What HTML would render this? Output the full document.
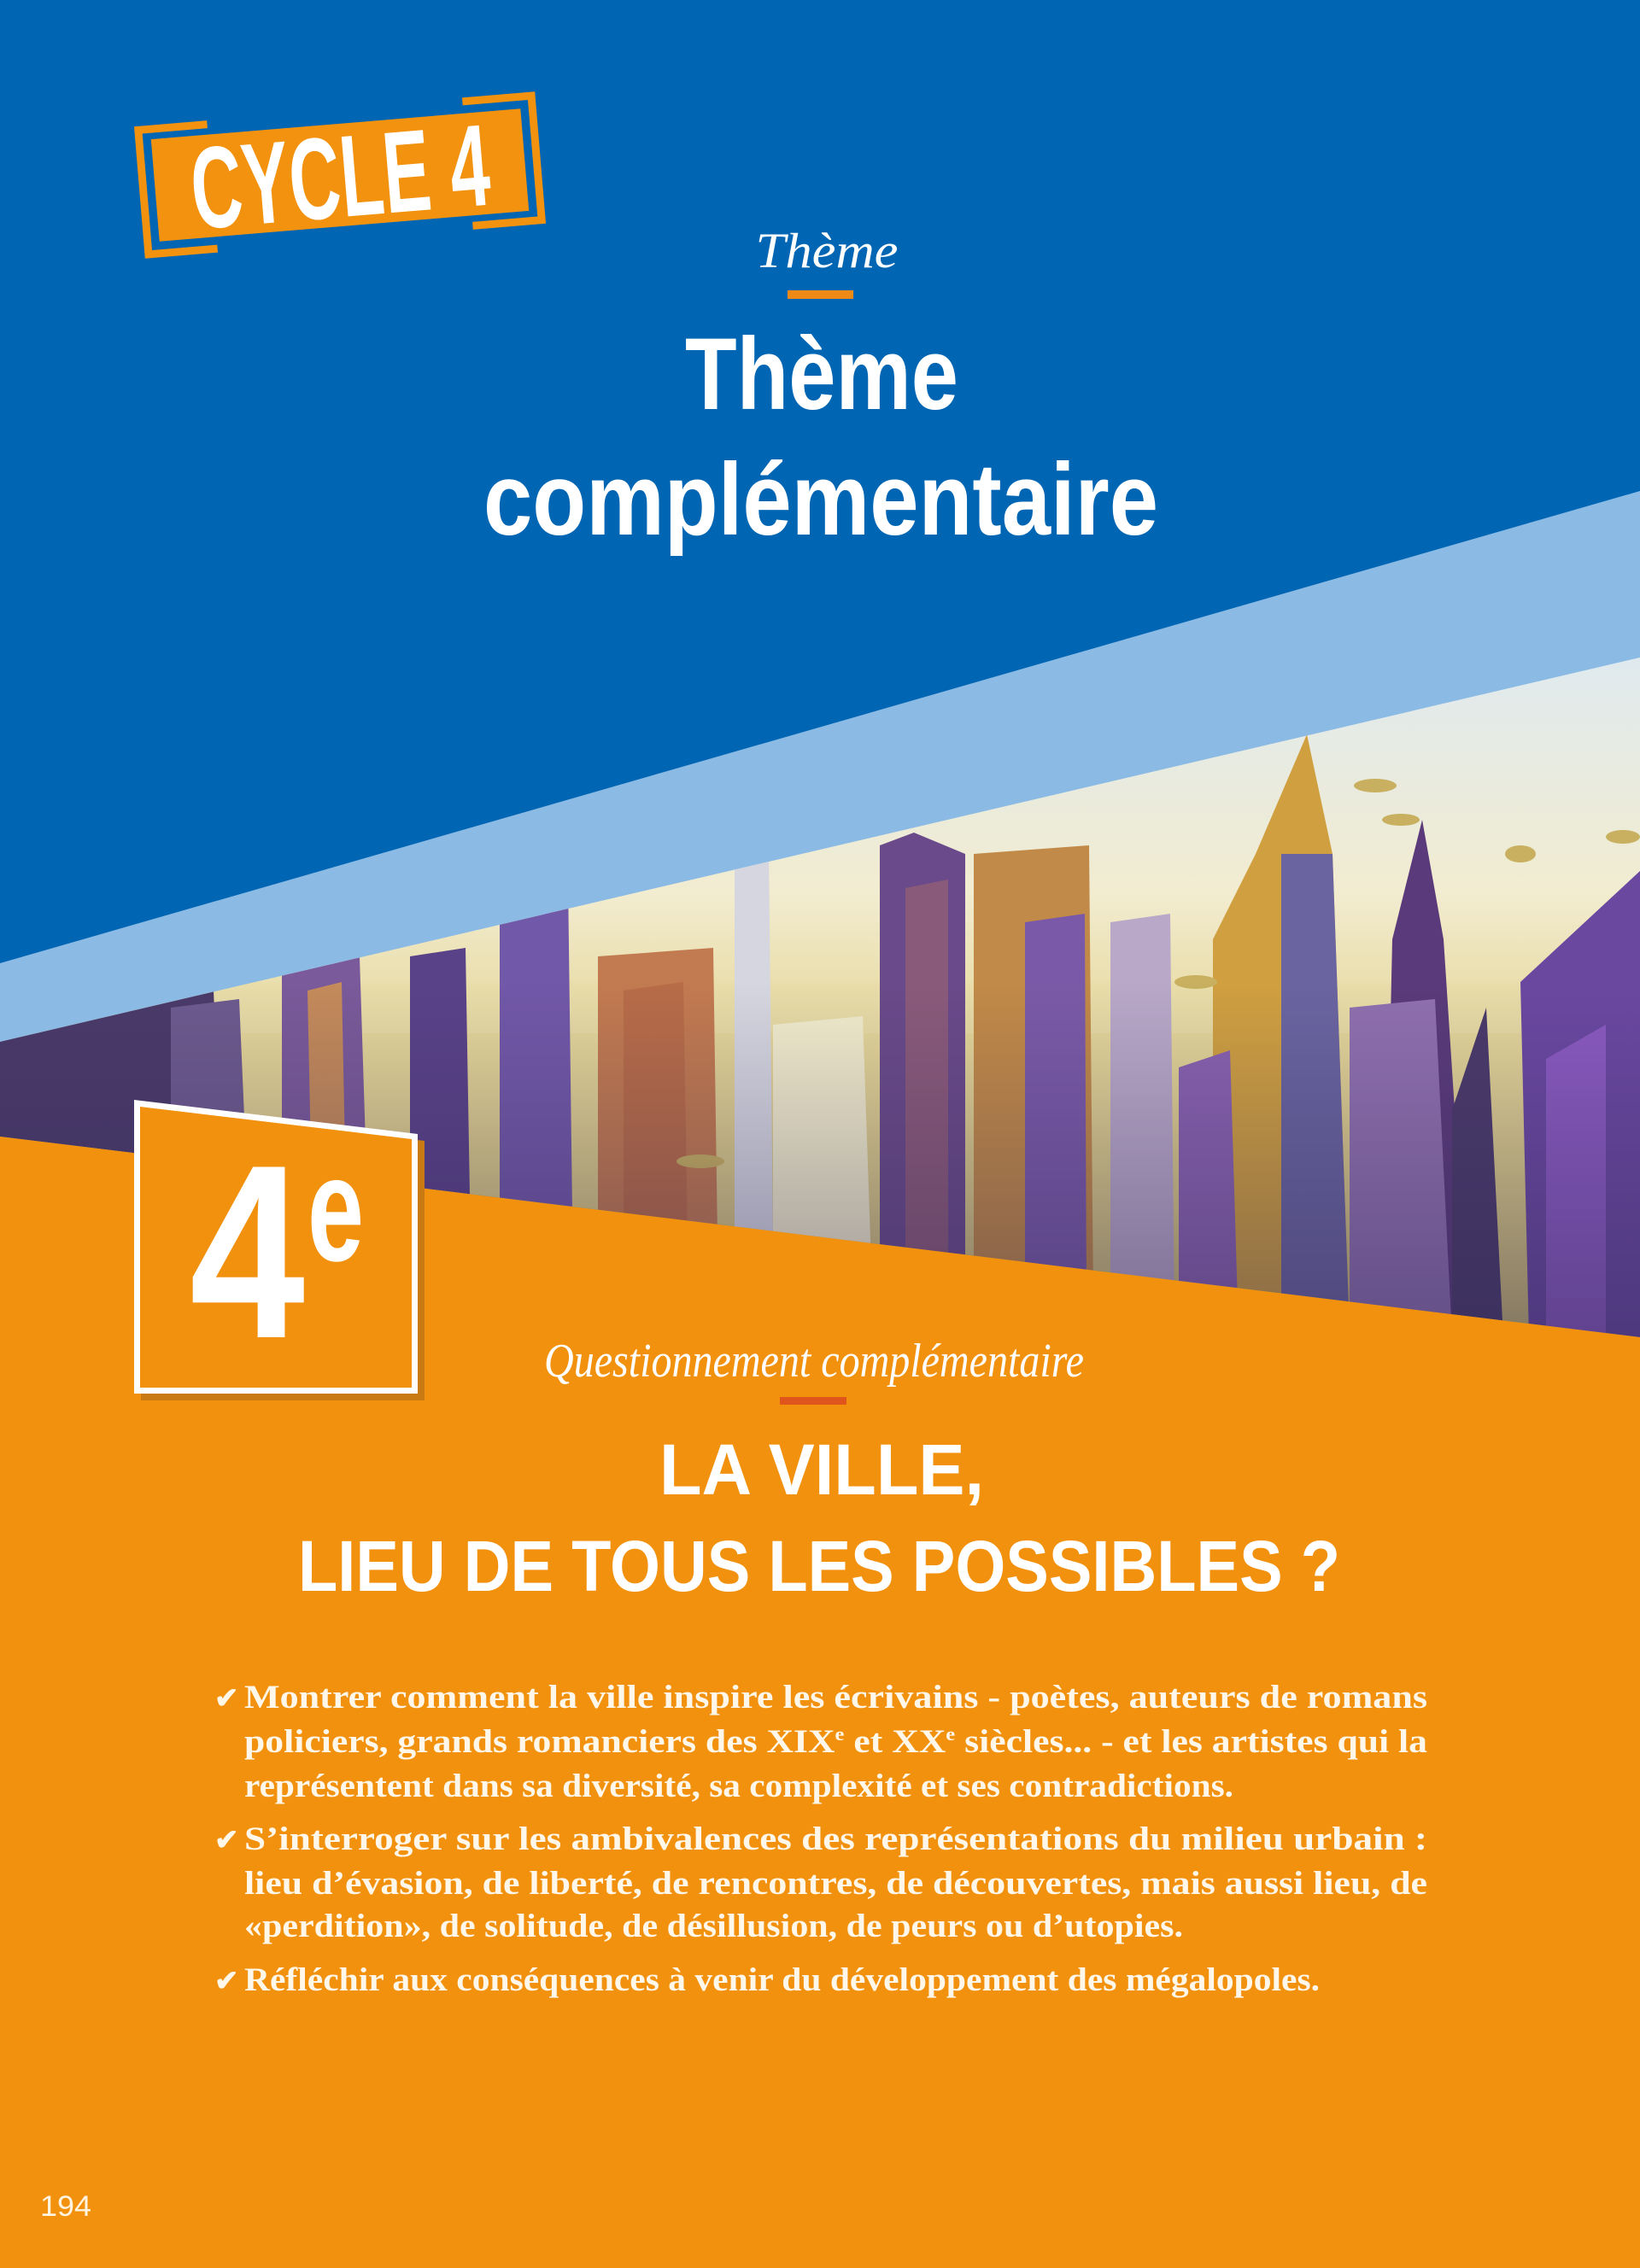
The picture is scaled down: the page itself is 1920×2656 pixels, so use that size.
<!DOCTYPE html>
<html><head><meta charset="utf-8"><style>
html,body{margin:0;padding:0;background:#0066b3;}
svg{display:block;}
</style></head><body>
<svg width="1920" height="2656" viewBox="0 0 1920 2656" xmlns="http://www.w3.org/2000/svg">
<defs>
<linearGradient id="sky" x1="0" y1="0" x2="0" y2="1" gradientUnits="objectBoundingBox">
<stop offset="0" stop-color="#dfeaf0"/><stop offset="0.35" stop-color="#f2ecd0"/><stop offset="0.55" stop-color="#e6d79a"/><stop offset="1" stop-color="#c9b870"/>
</linearGradient>
<linearGradient id="shade" x1="0" y1="0" x2="0" y2="1">
<stop offset="0" stop-color="#2a2450" stop-opacity="0"/><stop offset="1" stop-color="#2a2450" stop-opacity="0.45"/>
</linearGradient>
<clipPath id="photo"><polygon points="0,1220 1920,770 1920,1566 0,1331"/></clipPath>
</defs>
<rect width="1920" height="2656" fill="#0066b3"/>
<polygon points="0,1128 1920,575 1920,772 0,1222" fill="#8bbbe4"/>
<g clip-path="url(#photo)">
<rect x="0" y="760" width="1920" height="820" fill="url(#sky)"/>
<rect x="0" y="1150" width="1920" height="60" fill="#e8dda8" opacity="0.6"/>
<polygon points="0,1200 250,1160 260,1400 0,1400" fill="#4a3a6a"/>
<polygon points="200,1180 280,1170 290,1400 200,1400" fill="#6d5a8e"/>
<polygon points="330,1100 420,1090 430,1400 330,1400" fill="#7a5a9a"/>
<polygon points="360,1160 400,1150 405,1400 365,1400" fill="#c48a5a"/>
<polygon points="480,1120 545,1110 550,1400 480,1400" fill="#5a4288"/>
<polygon points="585,1040 665,1030 670,1420 585,1420" fill="#7258a8"/>
<polygon points="700,1120 835,1110 840,1450 700,1450" fill="#c27a50"/>
<polygon points="730,1160 800,1150 805,1450 730,1450" fill="#b86c48"/>
<polygon points="860,1000 900,990 905,1450 860,1450" fill="#d6d6e0"/>
<polygon points="905,1200 1010,1190 1020,1480 905,1480" fill="#f2eccc"/>
<polygon points="1030,990 1070,975 1130,1000 1130,1500 1030,1500" fill="#6a4a8a"/>
<polygon points="1060,1040 1110,1030 1110,1500 1060,1500" fill="#8a5a7a"/>
<polygon points="1140,1000 1275,990 1280,1520 1140,1520" fill="#c28a48"/>
<polygon points="1200,1080 1270,1070 1272,1520 1200,1520" fill="#7a5aa8"/>
<polygon points="1300,1080 1370,1070 1375,1540 1300,1540" fill="#b9a8c8"/>
<polygon points="1420,1100 1470,1000 1530,860 1560,1000 1580,1560 1420,1560" fill="#d0a040"/>
<polygon points="1500,1000 1560,1000 1580,1560 1500,1560" fill="#6a64a0"/>
<polygon points="1380,1250 1440,1230 1450,1560 1380,1560" fill="#8a62b0"/>
<polygon points="1630,1100 1665,960 1690,1100 1720,1560 1620,1560" fill="#5a3a7a"/>
<polygon points="1580,1180 1680,1170 1700,1566 1580,1566" fill="#9070b0"/>
<polygon points="1700,1300 1740,1180 1760,1566 1700,1566" fill="#4a3a6a"/>
<polygon points="1780,1150 1920,1020 1920,1566 1790,1566" fill="#6a48a0"/>
<polygon points="1810,1240 1880,1200 1880,1566 1810,1566" fill="#8a5ac0"/>
<g fill="#c8b060">
<ellipse cx="1610" cy="920" rx="25" ry="8"/><ellipse cx="1640" cy="960" rx="22" ry="7"/><ellipse cx="1780" cy="1000" rx="18" ry="10"/><ellipse cx="1400" cy="1150" rx="25" ry="8"/><ellipse cx="820" cy="1360" rx="28" ry="8"/><ellipse cx="1900" cy="980" rx="20" ry="8"/>
</g>
<rect x="0" y="1150" width="1920" height="430" fill="url(#shade)"/>
</g>
<polygon points="0,1331 1920,1566 1920,2656 0,2656" fill="#f2910e"/>

<g transform="translate(398,205) rotate(-4.75)">
<rect x="-217" y="-60" width="434" height="120" fill="#f3920f"/>
<path d="M-150,-72 L-231,-72 L-231,74 L-150,74" fill="none" stroke="#f3920f" stroke-width="9"/>
<path d="M150,-74 L231,-74 L231,72 L150,72" fill="none" stroke="#f3920f" stroke-width="9"/>
<text x="0" y="49" text-anchor="middle" font-family="Liberation Sans Narrow, Liberation Sans, sans-serif" font-weight="bold" font-size="136" fill="#fff" textLength="350" lengthAdjust="spacingAndGlyphs">CYCLE 4</text>
</g>

<text x="968" y="313" text-anchor="middle" font-family="Liberation Serif, serif" font-style="italic" font-size="58" fill="#fff" textLength="167" lengthAdjust="spacingAndGlyphs">Thème</text>
<rect x="922" y="340" width="77" height="10" fill="#f08a16"/>
<text x="962" y="479" text-anchor="middle" font-family="Liberation Sans Narrow, Liberation Sans, sans-serif" font-weight="bold" font-size="120" fill="#fff" textLength="320" lengthAdjust="spacingAndGlyphs">Thème</text>
<text x="961" y="626" text-anchor="middle" font-family="Liberation Sans Narrow, Liberation Sans, sans-serif" font-weight="bold" font-size="120" fill="#fff" textLength="790" lengthAdjust="spacingAndGlyphs">complémentaire</text>

<polygon points="165,1296 497,1336 497,1640 165,1640" fill="#c97a12"/>
<polygon points="157,1288 489,1328 489,1632 157,1632" fill="#fff"/>
<polygon points="164,1296 482,1334 482,1625 164,1625" fill="#f2910e"/>
<text x="222" y="1566" font-family="Liberation Sans Narrow, Liberation Sans, sans-serif" font-weight="bold" font-size="290" fill="#fff" textLength="135" lengthAdjust="spacingAndGlyphs">4</text>
<text x="360" y="1476" font-family="Liberation Sans Narrow, Liberation Sans, sans-serif" font-weight="bold" font-size="175" fill="#fff" textLength="66" lengthAdjust="spacingAndGlyphs">e</text>

<text x="953" y="1612" text-anchor="middle" font-family="Liberation Serif, serif" font-style="italic" font-size="56" fill="#fff" textLength="632" lengthAdjust="spacingAndGlyphs">Questionnement complémentaire</text>
<rect x="913" y="1636" width="78" height="9" fill="#e0551c"/>

<text x="962" y="1750" text-anchor="middle" font-family="Liberation Sans Narrow, Liberation Sans, sans-serif" font-weight="bold" font-size="84" fill="#fff" textLength="380" lengthAdjust="spacingAndGlyphs">LA VILLE,</text>
<text x="959" y="1863" text-anchor="middle" font-family="Liberation Sans Narrow, Liberation Sans, sans-serif" font-weight="bold" font-size="84" fill="#fff" textLength="1220" lengthAdjust="spacingAndGlyphs">LIEU DE TOUS LES POSSIBLES ?</text>

<g font-family="Liberation Serif, serif" font-weight="bold" font-size="39" fill="#fff8ea">
<text x="251" y="2000" font-size="34">✔</text>
<text x="286" y="2000" textLength="1385" lengthAdjust="spacingAndGlyphs">Montrer comment la ville inspire les écrivains - poètes, auteurs de romans</text>
<text x="286" y="2052" textLength="1385" lengthAdjust="spacingAndGlyphs">policiers, grands romanciers des XIX<tspan font-size="22" dy="-14">e</tspan><tspan dy="14"> et XX</tspan><tspan font-size="22" dy="-14">e</tspan><tspan dy="14"> siècles... - et les artistes qui la</tspan></text>
<text x="286" y="2104" textLength="1158" lengthAdjust="spacingAndGlyphs">représentent dans sa diversité, sa complexité et ses contradictions.</text>
<text x="251" y="2166" font-size="34">✔</text>
<text x="286" y="2166" textLength="1385" lengthAdjust="spacingAndGlyphs">S’interroger sur les ambivalences des représentations du milieu urbain :</text>
<text x="286" y="2218" textLength="1385" lengthAdjust="spacingAndGlyphs">lieu d’évasion, de liberté, de rencontres, de découvertes, mais aussi lieu, de</text>
<text x="286" y="2268" textLength="1099" lengthAdjust="spacingAndGlyphs">«perdition», de solitude, de désillusion, de peurs ou d’utopies.</text>
<text x="251" y="2331" font-size="34">✔</text>
<text x="286" y="2331" textLength="1259" lengthAdjust="spacingAndGlyphs">Réfléchir aux conséquences à venir du développement des mégalopoles.</text>
</g>

<text x="47" y="2595" font-family="Liberation Sans Narrow, Liberation Sans, sans-serif" font-size="34" fill="#fff4e0" textLength="60" lengthAdjust="spacingAndGlyphs">194</text>
</svg>
</body></html>
